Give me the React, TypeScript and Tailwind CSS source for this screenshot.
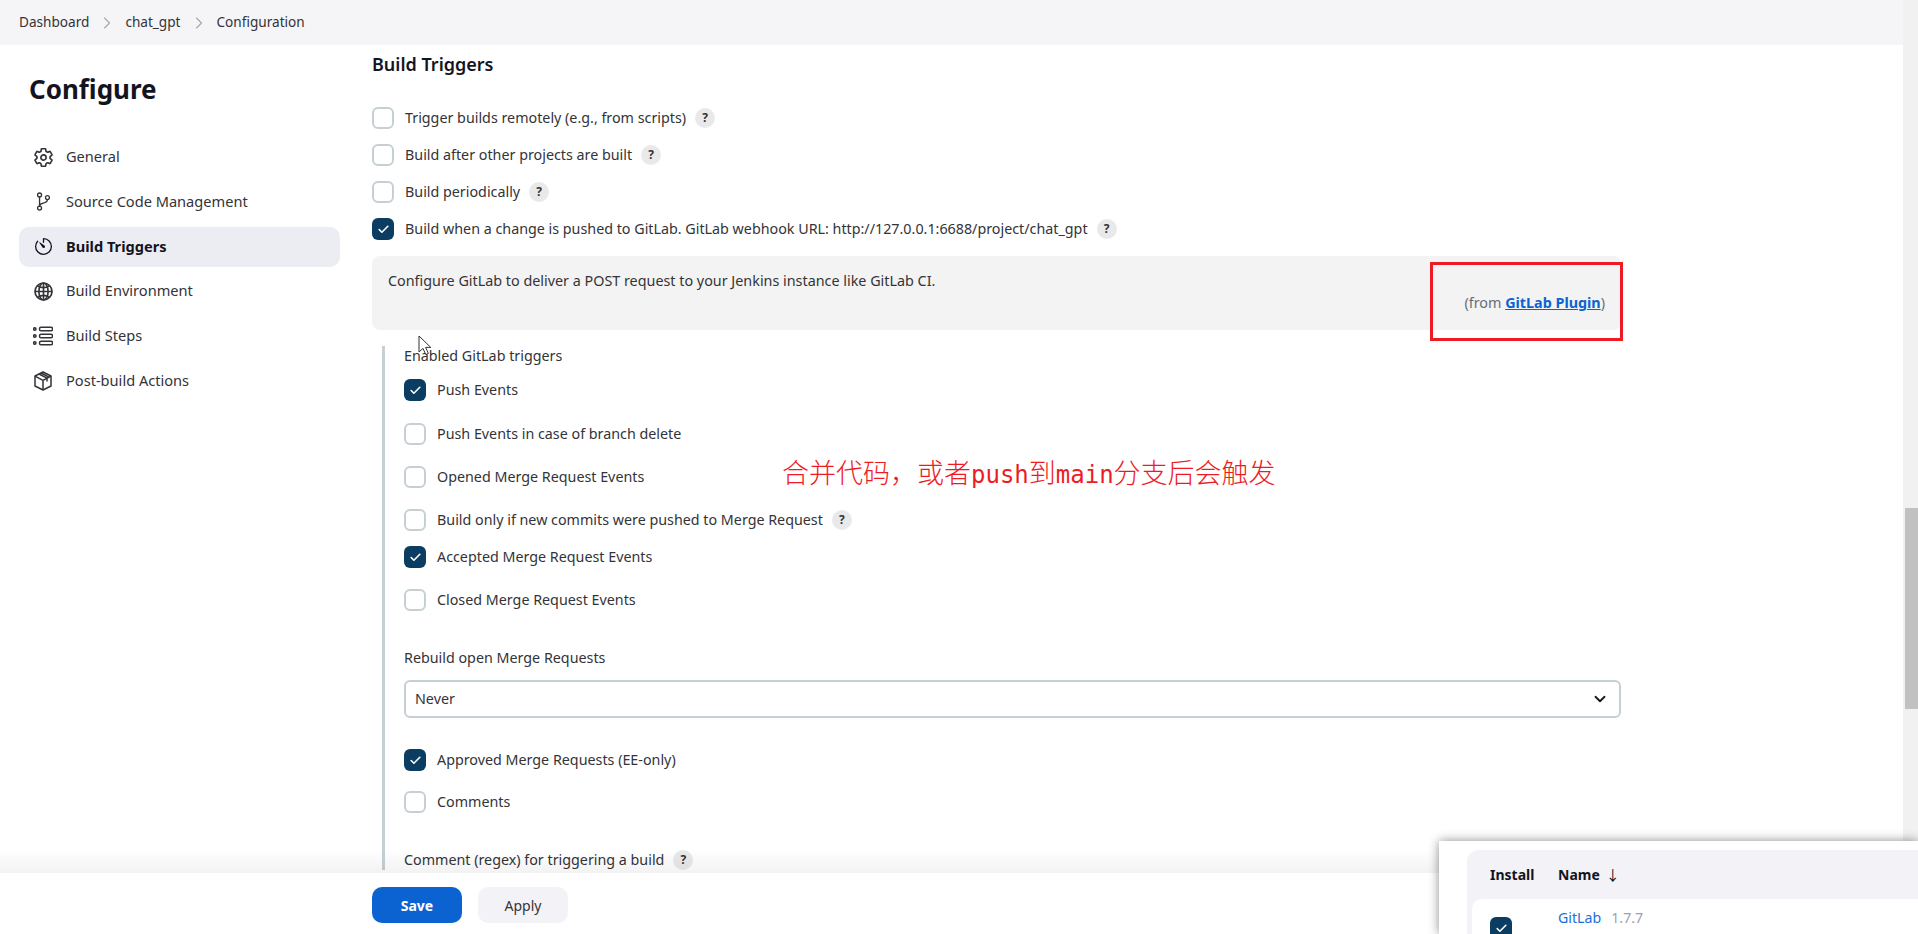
import React from 'react';
import { IoSettingsOutline, IoGitBranchOutline, IoTimerOutline, IoGlobeOutline } from 'react-icons/io5';
import { ChevronRight, ChevronDown, Check as CheckMark } from 'lucide-react';

const StepsIcon = () => (
  <svg width="20" height="20" viewBox="0 0 20 20" fill="none" stroke="currentColor" strokeWidth="1.5">
    <circle cx="1.8" cy="3" r="1.2" />
    <circle cx="1.8" cy="10" r="1.2" />
    <circle cx="1.8" cy="17" r="1.2" />
    <rect x="6.5" y="1.2" width="13" height="3.6" rx="1.6" />
    <rect x="6.5" y="8.2" width="13" height="3.6" rx="1.6" />
    <rect x="6.5" y="15.2" width="13" height="3.6" rx="1.6" />
  </svg>
);

// boxed parcel with the tape running over the top face
const ParcelIcon = () => (
  <svg width="20" height="20" viewBox="0 0 20 20" fill="none" stroke="currentColor" strokeWidth="1.5" strokeLinejoin="round">
    <path d="M10 1 18 5v10l-8 4-8-4V5z" />
    <path d="M2 5.2 10 9.4l8-4.2M10 9.4V19" />
    <path d="M6 3 14 7.2v3.4M8.2 2 16 6.1" />
  </svg>
);

const navItems = [
  { label: 'General', icon: <IoSettingsOutline size={21} className="[&_path]:stroke-[40px]" /> },
  { label: 'Source Code Management', icon: <IoGitBranchOutline size={21} /> },
  { label: 'Build Triggers', icon: <IoTimerOutline size={21} />, active: true },
  { label: 'Build Environment', icon: <IoGlobeOutline size={21} className="[&_*]:stroke-[40px]" /> },
  { label: 'Build Steps', icon: <StepsIcon /> },
  { label: 'Post-build Actions', icon: <ParcelIcon /> },
];

const Check = ({ on }: { on?: boolean }) => (
  <span
    className={
      on
        ? 'flex h-[22px] w-[22px] shrink-0 items-center justify-center rounded-[6px] bg-[#0b3d62] text-white'
        : 'h-[22px] w-[22px] shrink-0 rounded-[6px] border-2 border-[#c6d0d4] bg-white'
    }
  >
    {on && <CheckMark size={13} strokeWidth={3} />}
  </span>
);

const Help = () => (
  <span className="ml-[9px] flex h-5 w-5 shrink-0 items-center justify-center rounded-full bg-[#e9e9eb] text-[12px] font-bold text-[#333]">
    ?
  </span>
);

const Row = ({ label, on, help, className }: { label: string; on?: boolean; help?: boolean; className?: string }) => (
  <div className={`flex h-[22px] items-center ${className ?? ''}`}>
    <Check on={on} />
    <span className="ml-[11px] text-[14.3px] text-[#333338]">{label}</span>
    {help && <Help />}
  </div>
);

export default function App() {
  return (
    <div className="relative flex h-[934px] w-full overflow-hidden bg-white font-['Noto_Sans','Noto_Sans_CJK_SC',sans-serif] text-[#14141f]">
      <div className="flex min-w-0 flex-1 flex-col">
        {/* breadcrumb */}
        <div className="flex h-[45px] shrink-0 items-center bg-[#f5f5f7] pl-[19px] text-[13.6px] text-[#333338]">
          <span>Dashboard</span>
          <ChevronRight size={20} strokeWidth={1.4} className="mx-[8px] text-[#a8a8b0]" />
          <span>chat_gpt</span>
          <ChevronRight size={20} strokeWidth={1.4} className="mx-[8px] text-[#a8a8b0]" />
          <span>Configuration</span>
        </div>

        <div className="flex min-h-0 flex-1 overflow-hidden">
          {/* sidebar */}
          <div className="w-[372px] shrink-0 pl-[19px] pr-[32px]">
            <h1 className="mb-[30px] mt-[26px] pl-[10px] text-[26px] font-bold leading-[36px]">Configure</h1>
            <div className="flex flex-col gap-[4.75px]">
              {navItems.map((item) => (
                <div
                  key={item.label}
                  className={`flex h-10 items-center rounded-[10px] pl-[14px] text-[14.6px] ${
                    item.active ? 'bg-[#ecedf2] font-bold text-[#14141f]' : 'text-[#333338]'
                  }`}
                >
                  <span className="flex w-[33px] shrink-0">{item.icon}</span>
                  {item.label}
                </div>
              ))}
            </div>
          </div>

          {/* main form */}
          <div className="w-[1249px] shrink-0 pt-[7px]">
            <h2 className="text-[18px] font-semibold leading-[24px]">Build Triggers</h2>
            <div className="mt-[31px] flex flex-col gap-[15px]">
              <Row label="Trigger builds remotely (e.g., from scripts)" help />
              <Row label="Build after other projects are built" help />
              <Row label="Build periodically" help />
              <Row label="Build when a change is pushed to GitLab. GitLab webhook URL: http://127.0.0.1:6688/project/chat_gpt" on help />
            </div>

            <div className="mt-4 h-[74px] rounded-lg bg-[#f3f3f3] px-4 pt-[15px] text-[14.35px] leading-5 text-[#333338]">
              <div>Configure GitLab to deliver a POST request to your Jenkins instance like GitLab CI.</div>
              <div className="mt-[2px] text-right text-[#6b6b73]">
                (from <span className="font-bold text-[#0b63d1] underline">GitLab Plugin</span>)
              </div>
            </div>

            <div className="ml-[10px] mt-4 border-l-[3px] border-[#c6d0d4] pl-[19px]">
              <div className="text-[14.3px] leading-5 text-[#333338]">Enabled GitLab triggers</div>
              <Row label="Push Events" on className="mt-[13px]" />
              <Row label="Push Events in case of branch delete" className="mt-[22px]" />
              <Row label="Opened Merge Request Events" className="mt-[21px]" />
              <Row label="Build only if new commits were pushed to Merge Request" help className="mt-[21px]" />
              <Row label="Accepted Merge Request Events" on className="mt-[15px]" />
              <Row label="Closed Merge Request Events" className="mt-[21px]" />
              <div className="mt-[37px] text-[14.3px] leading-5 text-[#333338]">Rebuild open Merge Requests</div>
              <div className="mt-[12px] flex h-[38px] items-center justify-between rounded-[6px] border-2 border-[#c6d0d4] pl-[9px] pr-[10px] text-[14.3px] text-[#333338]">
                Never
                <ChevronDown size={18} strokeWidth={2.4} className="text-[#14141f]" />
              </div>
              <Row label="Approved Merge Requests (EE-only)" on className="mt-[31px]" />
              <Row label="Comments" className="mt-[20px]" />
              <div className="mt-[37px] flex items-center text-[14.3px] leading-5 text-[#333338]">
                Comment (regex) for triggering a build
                <Help />
              </div>
            </div>
          </div>
        </div>

        {/* save bar */}
        <div className="relative flex h-[61px] shrink-0 items-start gap-4 bg-white pl-[372px] pt-[14px] text-[14px]">
          <div className="absolute bottom-full left-0 right-0 h-[24px] bg-gradient-to-b from-transparent to-black/5" />
          <button className="h-9 w-[90px] rounded-[10px] bg-[#0b63d1] font-bold text-white">Save</button>
          <button className="h-9 w-[90px] rounded-[10px] bg-[#f3f3f7] text-[#333338]">Apply</button>
        </div>
      </div>

      {/* scrollbar */}
      <div className="w-[15px] shrink-0 bg-[#f1f1f1] pl-[2px]">
        <div className="mt-[508px] h-[201px] bg-[#c1c1c1]" />
      </div>

      {/* annotations pasted over the screenshot */}
      <div className="absolute left-[1430px] top-[262px] h-[79px] w-[193px] border-[3px] border-[#ed1c24]" />
      <div className="absolute left-[782px] top-[454px] whitespace-nowrap text-[27px] font-light leading-[38px] text-[#ed1c24]">
        合并代码，或者<span className="font-['DejaVu_Sans_Mono',monospace] text-[24px]">push</span>到
        <span className="font-['DejaVu_Sans_Mono',monospace] text-[24px]">main</span>分支后会触发
      </div>
      <svg className="absolute left-[418px] top-[335px]" width="14" height="21" viewBox="0 0 14 21">
        <path d="M1 1v16l4-3.6 2.8 6.2 2.6-1.2-2.8-6h5.2z" fill="#fff" stroke="#333" strokeWidth="1" />
      </svg>

      {/* pasted plugin table */}
      <div className="absolute bottom-0 left-[1439px] right-0 h-[93px] bg-white pl-[28px] pt-[9px] shadow-[0_0_10px_rgba(0,0,0,0.45)]">
        <div className="h-full rounded-tl-[12px] bg-[#f2f2f7] pl-[5px]">
          <div className="flex h-[49px] items-center pl-[18px] text-[14px] font-bold text-[#14141f]">
            <span className="w-[68px]">Install</span>
            <span>Name</span>
            <span className="ml-[6px] font-normal">↓</span>
          </div>
          <div className="flex h-[35px] rounded-tl-[10px] bg-white pl-[18px] pt-[8px] text-[14.2px]">
            <div className="mt-[10px] w-[68px]">
              <Check on />
            </div>
            <span className="text-[#1c6fd6]">GitLab</span>
            <span className="ml-[10px] text-[#a0a0ac]">1.7.7</span>
          </div>
        </div>
      </div>
    </div>
  );
}
